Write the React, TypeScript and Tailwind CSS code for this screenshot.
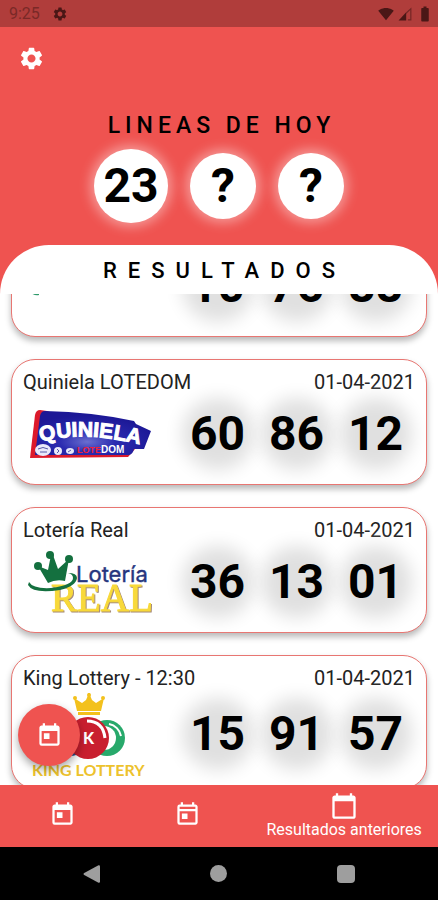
import type { ReactNode } from "react";
import {
  MdBatteryFull,
  MdCalendarToday,
  MdOutlineToday,
  MdSettings,
  MdSignalWifi4Bar,
  MdToday,
} from "react-icons/md";

function SignalIcon() {
  return (
    <svg viewBox="0 0 24 24" className="size-3.5" fill="currentColor" aria-hidden="true">
      <path d="M1 23 14 9v14z" />
      <path d="M14 9 23 1v22h-6v-2h4V5l-7 7z" opacity="0.6" />
    </svg>
  );
}

function GreenLogo() {
  return (
    <svg viewBox="0 0 134 80" className="h-20 w-[134px]" role="img" aria-label="Lotería">
      <path d="M6 12h10v30l0 7q-4 1-8-2Q6 44 6 38Z" fill="#2f9a6b" />
    </svg>
  );
}

function QuinielaLogo() {
  return (
    <svg viewBox="0 0 134 80" className="h-20 w-[134px]" role="img" aria-label="Quiniela LOTEDOM">
      <defs>
        <path id="quiniela-arc" d="M18 48Q62 35 126 53" />
        <radialGradient id="quiniela-blue" cx="45%" cy="70%" r="60%">
          <stop offset="0" stopColor="#6a6fd0" />
          <stop offset="0.4" stopColor="#2b2bb0" />
          <stop offset="1" stopColor="#1c1896" />
        </radialGradient>
      </defs>
      <path d="M17 16 24 17 112 55 105 63 7 64 12 21Q13 16 17 16Z" fill="#dc1a2b" />
      <path d="M22 17Q70 18 111 27L113 30 128 37 121 55 111 55Q110 60 106 61L12 61 17 22Q18 17 22 17Z" fill="url(#quiniela-blue)" />
      <g fontFamily="Liberation Sans, sans-serif" fontWeight="700">
        <text fontSize="21" fill="#fff" stroke="#fff" strokeWidth="1">
          <textPath href="#quiniela-arc">QUINIELA</textPath>
        </text>
        <text x="54" y="59" fontSize="9" fill="#f0203a">
          LOTE
        </text>
        <text x="78" y="59" fontSize="10" fill="#fff">
          DOM
        </text>
      </g>
      <g fill="#e9e9fa">
        <ellipse cx="20" cy="56" rx="8" ry="6" />
        <circle cx="35" cy="57" r="4" />
        <ellipse cx="47" cy="57" rx="4" ry="3" />
      </g>
      <path d="M15 55q5-3 10 0M17 58h7M34 55l2 2-2 2M45 58l3-2" fill="none" stroke="#5558a8" />
    </svg>
  );
}

function RealLogo() {
  return (
    <svg viewBox="0 0 134 80" className="h-20 w-[134px]" role="img" aria-label="Lotería Real">
      <text
        x="28"
        y="69"
        fill="#f8d93a"
        stroke="#f8d93a"
        strokeWidth="1"
        fontFamily="Liberation Serif, serif"
        fontSize="39"
        className="drop-shadow-[1px_1px_0_#a58a78]"
      >
        REAL
      </text>
      <g fill="#14703f">
        <circle cx="27" cy="13" r="4" />
        <circle cx="15" cy="24" r="4" />
        <circle cx="46" cy="17" r="4" />
        <path d="M15 24 25 28 28 13h2L35 27 46 17 42 39Q33 37 25 41Z" />
        <path d="M6 40Q10 47 28 46Q50 43 50 36Q50 32 45 31Q54 31 54 36Q53 44 37 48Q10 52 5 43Z" />
      </g>
      <text x="53" y="40" fill="#26357e" stroke="#26357e" strokeWidth="0.4" fontFamily="Inter, sans-serif" fontSize="22">
        Lotería
      </text>
    </svg>
  );
}

function KingLogo() {
  return (
    <svg viewBox="0 0 134 88" className="h-[88px] w-[134px]" role="img" aria-label="King Lottery">
      <g fill="#f3c11d">
        <path d="M54 21 51 8 59 13 63 10 66 3 69 10 73 13 81 8 78 21Z" />
        <path d="M55 22h22v3H55z" />
        <path d="M65 3h2v8h-2z" />
        <circle cx="66" cy="5" r="2" />
        <circle cx="52" cy="8" r="2" />
        <circle cx="80" cy="8" r="2" />
      </g>
      <circle cx="47" cy="48" r="18" fill="#284f91" />
      <circle cx="84" cy="48" r="18" fill="#28a96b" />
      <circle cx="81" cy="48" r="12" fill="#fff" />
      <path d="M86 34a15 15 0 0 1 12 12" fill="none" stroke="#fff" strokeWidth="2" />
      <circle cx="65" cy="48" r="21" fill="#c91f2f" />
      <path d="M64 31q16 0 18 17" fill="none" stroke="#fff" strokeWidth="3" />
      <text x="60" y="54" fill="#fff" fontFamily="Lato, sans-serif" fontSize="16" fontWeight="900">
        K
      </text>
      <text x="9" y="86" fill="#edc22d" fontFamily="Lato, sans-serif" fontSize="16" fontWeight="700">
        KING LOTTERY
      </text>
    </svg>
  );
}

type Draw = { name: string; date: string; numbers: string[]; logo: ReactNode };

const draws: Draw[] = [
  { name: "Lotería", date: "01-04-2021", numbers: ["10", "76", "88"], logo: <GreenLogo /> },
  { name: "Quiniela LOTEDOM", date: "01-04-2021", numbers: ["60", "86", "12"], logo: <QuinielaLogo /> },
  { name: "Lotería Real", date: "01-04-2021", numbers: ["36", "13", "01"], logo: <RealLogo /> },
  { name: "King Lottery - 12:30", date: "01-04-2021", numbers: ["15", "91", "57"], logo: <KingLogo /> },
];

function DrawCard({ name, date, numbers, logo }: Draw) {
  return (
    <li className="shrink-0 rounded-3xl border border-[#e87672] bg-white px-[11px] py-2.5 shadow-[0_4px_6px_rgba(0,0,0,0.28)]">
      <div className="flex justify-between text-xl leading-6 text-[#222]">
        <h2>{name}</h2>
        <time dateTime="2021-04-01">{date}</time>
      </div>
      <div className="flex items-center justify-between">
        {logo}
        <div className="grid w-[237px] grid-cols-3 justify-items-center">
          {numbers.map((n) => (
            <span
              key={n}
              className="flex size-8 items-center justify-center rounded-full bg-[#e0e0e0] text-5xl font-bold text-black shadow-[0_0_18px_20px_#e0e0e0]"
            >
              {n}
            </span>
          ))}
        </div>
      </div>
    </li>
  );
}

function Ball({ value }: { value: string }) {
  const size = value === "?" ? "size-[66px]" : "size-[74px]";
  return (
    <span
      className={`${size} flex items-center justify-center rounded-full bg-white text-5xl font-bold shadow-[0_0_12px_4px_rgba(255,255,255,0.4)]`}
    >
      {value}
    </span>
  );
}

export default function App() {
  return (
    <div className="flex h-screen flex-col overflow-hidden bg-white font-[Roboto,sans-serif] text-black">
      <div className="flex h-[27px] shrink-0 items-center justify-between bg-[#b03d3b] pr-1 pl-[9px] text-[#4a1716]">
        <div className="flex items-center gap-3">
          <span className="text-base text-[#7a2927]">9:25</span>
          <MdSettings className="size-4" />
        </div>
        <div className="flex items-center gap-1">
          <MdSignalWifi4Bar className="size-4" />
          <SignalIcon />
          <MdBatteryFull className="size-[18px]" />
        </div>
      </div>

      <header className="shrink-0 bg-[#ef5350]">
        <button type="button" aria-label="Ajustes" className="mt-[18px] ml-[18px] block text-white">
          <MdSettings className="size-[27px]" />
        </button>
        <h1 className="mt-10 pl-[5px] text-center text-[23px] leading-7 font-medium tracking-[5px]">
          LINEAS DE HOY
        </h1>
        <div className="mt-[9px] flex items-center justify-center gap-[22px]">
          <Ball value="23" />
          <Ball value="?" />
          <Ball value="?" />
        </div>
        <div className="mt-[22px] rounded-t-[56px] bg-white pt-3 pb-[9px] pl-[11px] text-center text-[22px] leading-7 font-medium tracking-[11px]">
          RESULTADOS
        </div>
      </header>

      <main className="relative min-h-0 flex-1 overflow-hidden">
        <ul className="-mt-[83px] flex flex-col gap-[22px] px-[11px]">
          {draws.map((draw, i) => (
            <DrawCard key={i} {...draw} />
          ))}
        </ul>
        <button
          type="button"
          aria-label="Elegir fecha"
          className="absolute bottom-[19px] left-[18px] flex size-[62px] items-center justify-center rounded-full bg-[#ef5350] text-white shadow-[0_4px_8px_rgba(0,0,0,0.35)]"
        >
          <MdToday className="size-[27px]" />
        </button>
      </main>

      <nav className="grid h-[62px] shrink-0 grid-cols-[2fr_2fr_3fr] bg-[#ef5350] text-white">
        <button type="button" aria-label="Hoy" className="flex items-center justify-center pb-1">
          <MdToday className="size-[27px]" />
        </button>
        <button type="button" aria-label="Ayer" className="flex items-center justify-center pb-1">
          <MdOutlineToday className="size-[27px]" />
        </button>
        <button type="button" aria-current="page" className="flex flex-col items-center justify-center">
          <MdCalendarToday className="size-7" />
          <span className="text-base leading-5 whitespace-nowrap">Resultados anteriores</span>
        </button>
      </nav>

      <div className="grid h-[53px] shrink-0 grid-cols-3 place-items-center bg-black px-[29px] text-[#9e9e9e]">
        <button type="button" aria-label="Atrás">
          <svg viewBox="0 0 18 18" className="size-[18px]" fill="currentColor" aria-hidden="true">
            <path d="M0.5 9Q0.5 8.500 1.200 8L15.500 0.300Q17 0 17 1.500V16.500Q17 18 15.500 17.700L1.200 10Q0.500 9.500 0.500 9Z" />
          </svg>
        </button>
        <button type="button" aria-label="Inicio" className="size-[17px] rounded-full bg-[#9e9e9e]" />
        <button type="button" aria-label="Recientes" className="size-[18px] rounded-sm bg-[#9e9e9e]" />
      </div>
    </div>
  );
}
